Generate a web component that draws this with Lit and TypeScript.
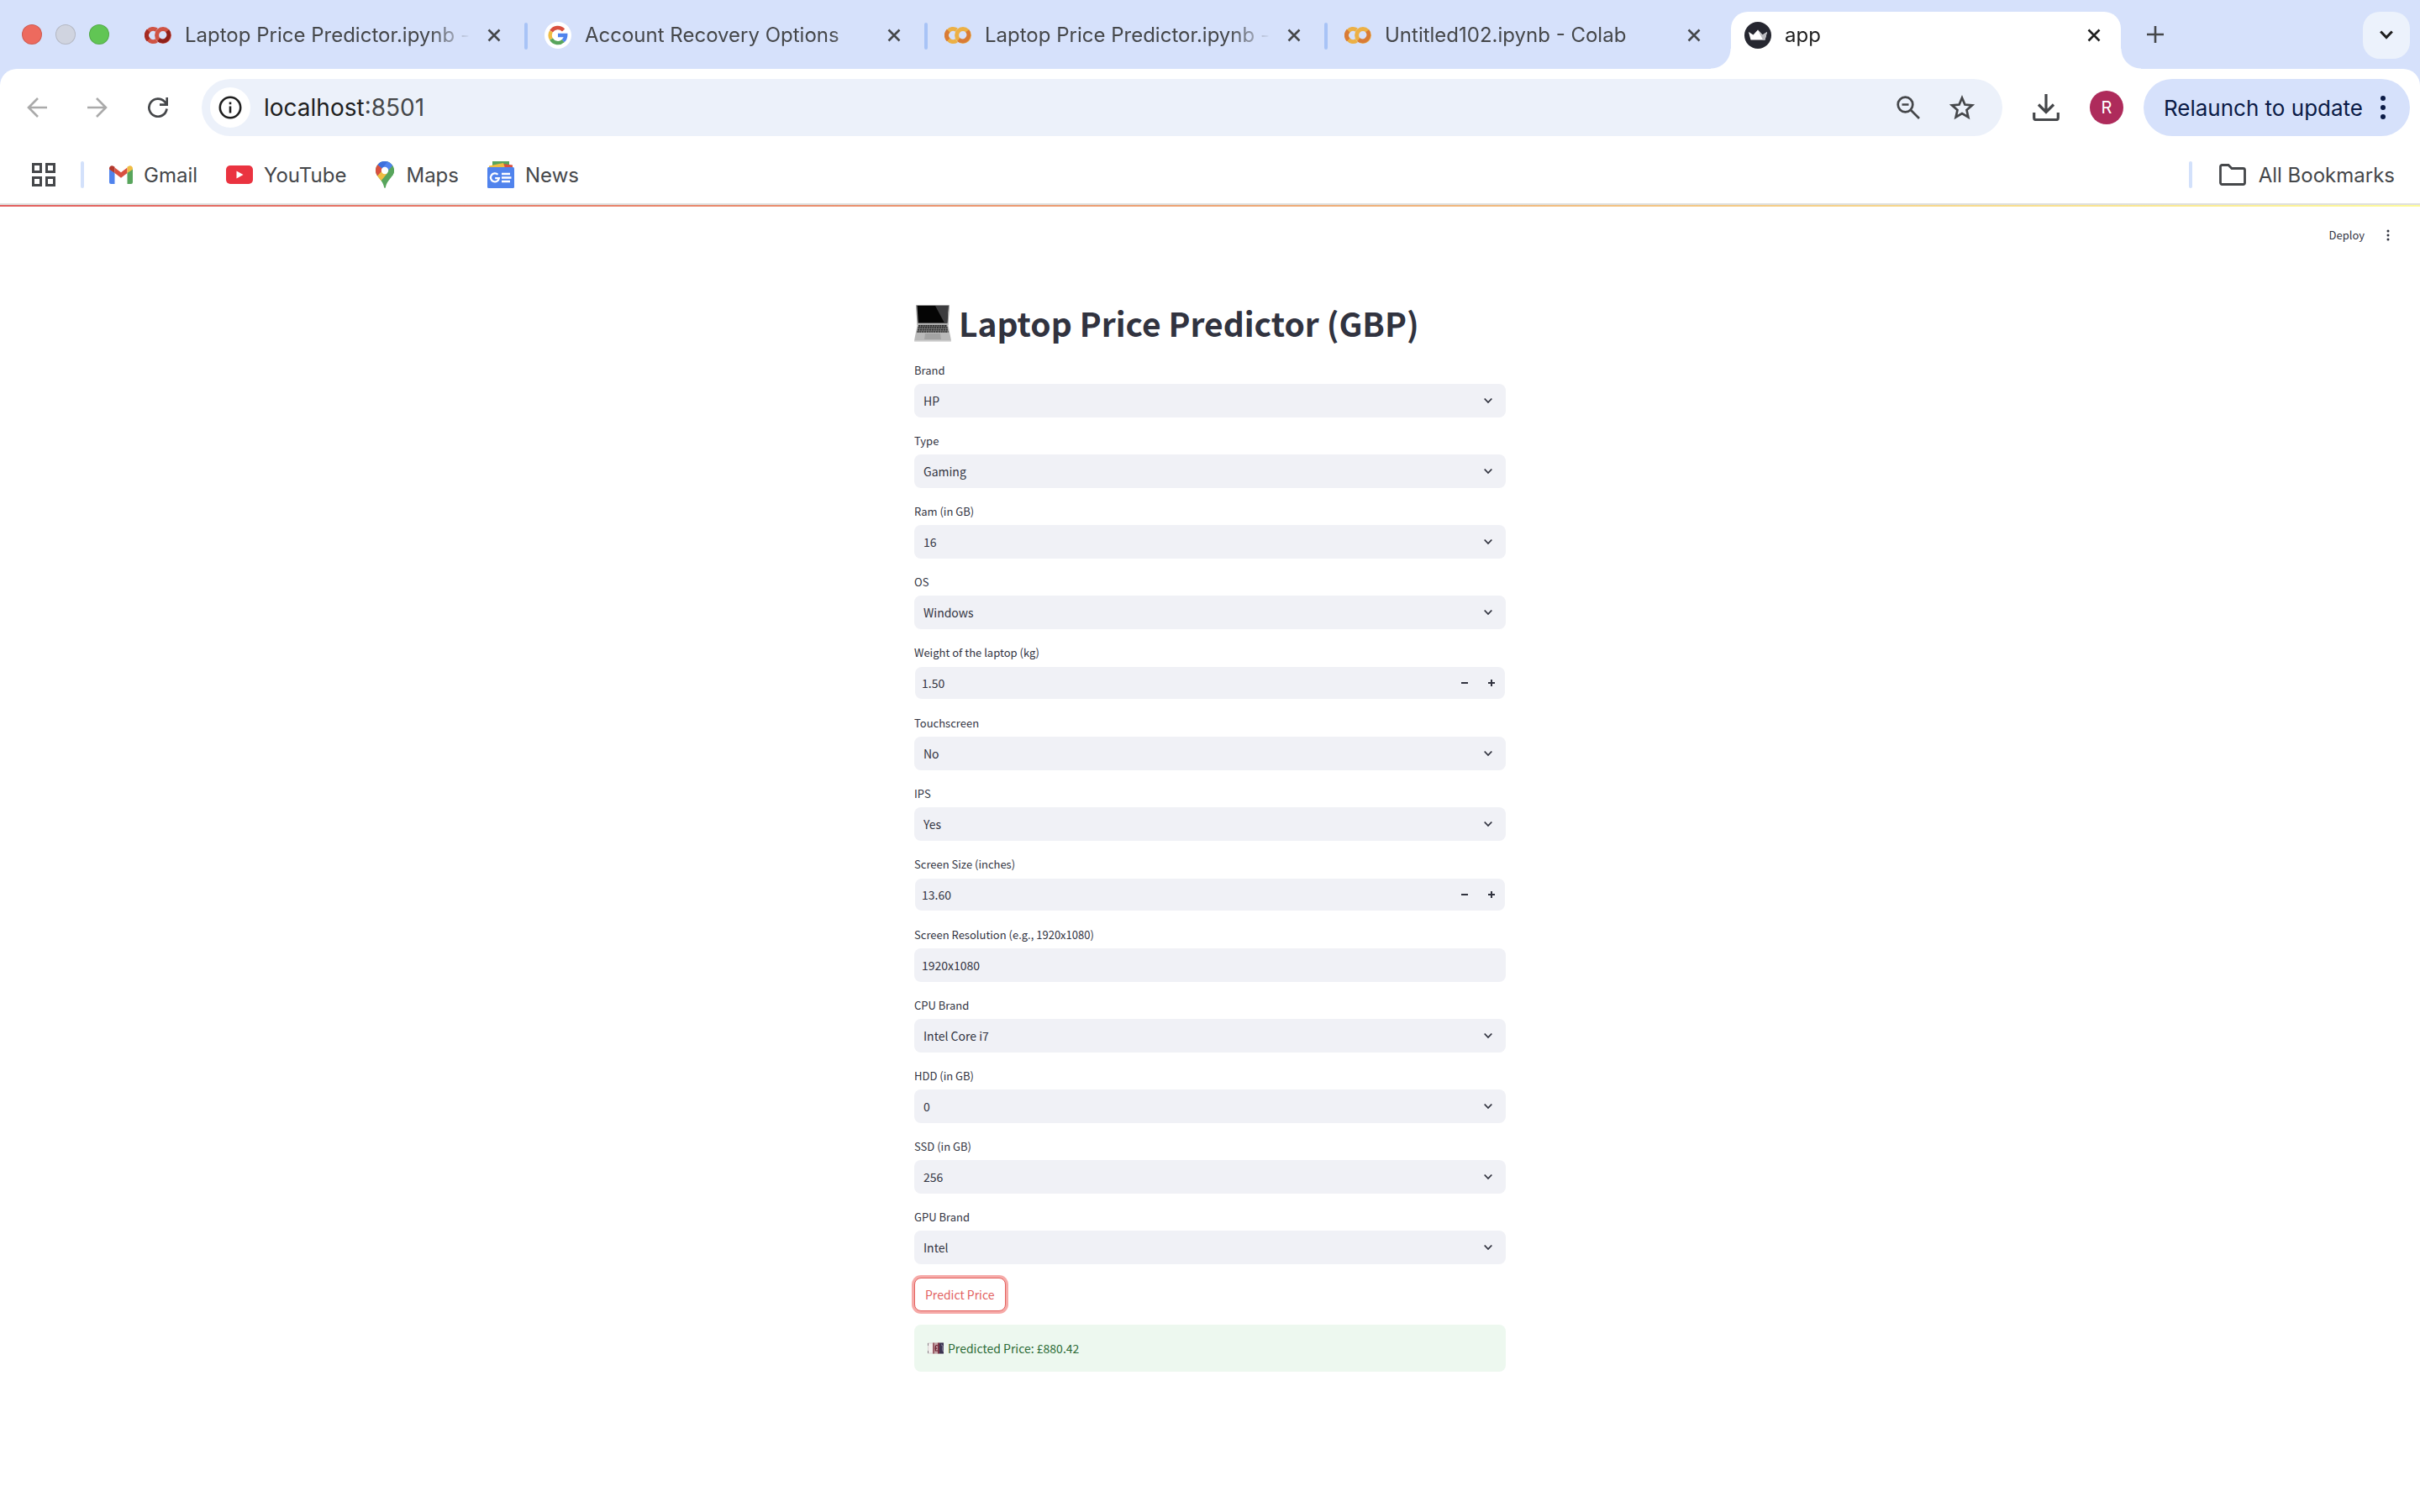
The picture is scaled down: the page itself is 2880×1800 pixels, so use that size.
import { LitElement, html, css, svg, nothing } from "lit";
import { customElement, state } from "lit/decorators.js";

const icon = (w: number, h: number, vb: string, body: unknown) =>
  html`<svg class="icon" width=${w} height=${h} viewBox=${vb} fill="none" aria-hidden="true">${body}</svg>`;

const closeIcon = () =>
  icon(16, 16, "0 0 16 16", svg`<path d="M1.5 1.5l13 13M14.5 1.5l-13 13" stroke="currentColor" stroke-width="2.6"/>`);

const colab = (a: string, b: string, c: string) =>
  icon(32, 32, "0 0 32 32", svg`
    <path d="M14.4 9.6A7.6 7.6 0 1 0 14.4 22.4" stroke=${b} stroke-width="5"/>
    <path d="M4.6 10.6A7.6 7.6 0 0 0 4.6 21.4" stroke=${a} stroke-width="5"/>
    <circle cx="22" cy="16" r="7.4" stroke=${b} stroke-width="5"/>
    <path d="M27.2 10.8A7.4 7.4 0 0 1 16.8 21.2" stroke=${c} stroke-width="5"/>`);

const google = () =>
  icon(32, 32, "0 0 32 32", svg`
    <circle cx="16" cy="16" r="16" fill="#fff"/>
    <path d="M22.6 9.9A9.3 9.3 0 0 0 8 11.3" stroke="#d9503f" stroke-width="4.4"/>
    <path d="M8 11.3a9.3 9.3 0 0 0 0 9.4" stroke="#f0bc42" stroke-width="4.4"/>
    <path d="M8 20.7a9.3 9.3 0 0 0 14.2 2" stroke="#58a55c" stroke-width="4.4"/>
    <path d="M22.2 22.7a9.3 9.3 0 0 0 3-6.7H16" stroke="#5083ed" stroke-width="4.4"/>`);

const crown = () =>
  icon(32, 32, "0 0 32 32", svg`
    <circle cx="16" cy="16" r="16" fill="#262730"/>
    <path d="M5 12l5.500 3.500L16 9.500l5.500 6L27 12l-2.500 9.500h-17z" fill="#fff"/>
    <path d="M16 9.500l5.500 6L27 12l-2.500 9.500H22z" fill="#b9b9bd"/>`);

interface Tab { title: string; icon: () => unknown; active?: boolean }

const TABS: Tab[] = [
  { title: "Laptop Price Predictor.ipynb -", icon: () => colab("#a52a22", "#cf5344", "#8f201a") },
  { title: "Account Recovery Options", icon: google },
  { title: "Laptop Price Predictor.ipynb -", icon: () => colab("#d97b36", "#ecb045", "#d97b36") },
  { title: "Untitled102.ipynb - Colab", icon: () => colab("#d97b36", "#ecb045", "#d97b36") },
  { title: "app", icon: crown, active: true },
];

const gmail = () =>
  icon(28, 22, "0 0 28 22", svg`
    <path d="M0 4v16a2 2 0 0 0 2 2h4.500V8.500z" fill="#5083ed"/>
    <path d="M28 4v16a2 2 0 0 1-2 2h-4.500V8.500z" fill="#58a55c"/>
    <path d="M6.500 2.500L14 8.200l7.500-5.700v6.500L14 14.800 6.500 9z" fill="#d9503f"/>
    <path d="M0 3.500C0 .4 3.200-.8 5.400.9l1.100.8V9L0 4.500z" fill="#b3382c"/>
    <path d="M28 3.500C28 .4 24.800-.8 22.600.9l-1.100.8V9L28 4.500z" fill="#f0bc42"/>`);

const youtube = () =>
  icon(32, 22, "0 0 32 22", svg`
    <rect width="32" height="22" rx="5" fill="#ea3340"/><path d="M12.500 6.500v9l8-4.500z" fill="#fff"/>`);

const maps = () =>
  icon(24, 32, "0 0 24 32", svg`
    <clipPath id="pin"><path d="M12 0a11 11 0 0 1 11 11c0 3.600-1.600 6-4.200 9-3.200 3.700-5 6.500-6 11.300q-.8 1.400-1.600 0C10.200 26.500 8.400 23.700 5.200 20 2.600 17 1 14.600 1 11A11 11 0 0 1 12 0z"/></clipPath>
    <g clip-path="url(#pin)">
      <path d="M0 0h24v32H0z" fill="#58a55c"/>
      <path d="M0 20.500L9 10h9.500L6.500 24.500z" fill="#f0bc42"/>
      <path d="M0 0v20.500L11 9z" fill="#d9503f"/>
      <path d="M3.500 4L11 10.500 20.800 4 16 0H6z" fill="#5083ed"/>
      <path d="M3.500 4L9 8.500 15.500.5 12 0H6z" fill="#3f70dc"/>
      <path d="M12 11L20.800 3.800 24 12v6L14 14z" fill="#58a55c"/>
      <path d="M9 8.500L15.500 0l5.800 5L14 13.500z" fill="#5083ed"/>
    </g>
    <circle cx="12" cy="11" r="4.200" fill="#fff"/>`);

const news = () =>
  icon(32, 32, "0 0 32 32", svg`
    <path d="M6 0h20v8H6z" fill="#58a55c"/>
    <path d="M18 3l12 1.500V9H16z" fill="#d9503f"/>
    <path d="M2 5.500L19 2l2 6H2z" fill="#f0bc42"/>
    <rect y="7" width="32" height="25" rx="1.500" fill="#5083ed"/>
    <path d="M12.500 15.800a5 5 0 1 0 1.400 4.400H9.200" stroke="#fff" stroke-width="2.200"/>
    <path d="M17 15h10M17 19.500h11.500M17 24h10" stroke="#fff" stroke-width="2.400"/>`);

const BOOKMARKS = [
  { label: "Gmail", icon: gmail, href: "#gmail" },
  { label: "YouTube", icon: youtube, href: "#youtube" },
  { label: "Maps", icon: maps, href: "#maps" },
  { label: "News", icon: news, href: "#news" },
];

interface Field { id: string; label: string; kind: "select" | "number" | "text"; value: string }

const FIELDS: Field[] = [
  { id: "brand", label: "Brand", kind: "select", value: "HP" },
  { id: "type", label: "Type", kind: "select", value: "Gaming" },
  { id: "ram", label: "Ram (in GB)", kind: "select", value: "16" },
  { id: "os", label: "OS", kind: "select", value: "Windows" },
  { id: "weight", label: "Weight of the laptop (kg)", kind: "number", value: "1.50" },
  { id: "touch", label: "Touchscreen", kind: "select", value: "No" },
  { id: "ips", label: "IPS", kind: "select", value: "Yes" },
  { id: "size", label: "Screen Size (inches)", kind: "number", value: "13.60" },
  { id: "resolution", label: "Screen Resolution (e.g., 1920x1080)", kind: "text", value: "1920x1080" },
  { id: "cpu", label: "CPU Brand", kind: "select", value: "Intel Core i7" },
  { id: "hdd", label: "HDD (in GB)", kind: "select", value: "0" },
  { id: "ssd", label: "SSD (in GB)", kind: "select", value: "256" },
  { id: "gpu", label: "GPU Brand", kind: "select", value: "Intel" },
];

const button = css`
  button { font: inherit; color: inherit; border: 0; padding: 0; background: none; display: flex; align-items: center; justify-content: center; }
  .icon { display: block; flex: none; }
`;

@customElement("browser-chrome")
class BrowserChrome extends LitElement {
  static styles = [button, css`
    :host { display: block; font-family: Inter, "Liberation Sans", sans-serif; font-size: 24px; color: #45474a; background: #d6e1fb; }
    .strip { display: flex; height: 82px; padding: 0 12px 0 26px; }
    .lights { display: flex; gap: 16px; align-items: center; width: 126px; flex: none; }
    .light { width: 24px; height: 24px; border-radius: 50%; box-sizing: border-box; border: 1px solid #0002; }
    .red { background: #ed6a5e; } .grey { background: #d0d4e0; } .green { background: #61c554; }
    .tabs { display: flex; flex: 0 1 2372px; min-width: 0; }
    .tab { position: relative; display: flex; align-items: center; flex: 1 1 0; min-width: 0; padding: 2px 28px 0 20px; }
    .tab.active { background: #fff; color: #1f1f1f; margin-top: 14px; border-radius: 20px 20px 0 0; padding: 0 24px 12px 16px; flex: 0 1 424px; }
    .tab.active::before, .tab.active::after { content: ""; position: absolute; bottom: 0; width: 24px; height: 24px; }
    .tab.active::before { right: 100%; background: radial-gradient(circle at 0 0, transparent 23px, #fff 24px); }
    .tab.active::after { left: 100%; background: radial-gradient(circle at 100% 0, transparent 23px, #fff 24px); }
    .title { flex: 1; min-width: 0; margin: 0 16px 0 16px; overflow: hidden; white-space: nowrap; line-height: 32px; mask-image: linear-gradient(to right, #000 calc(100% - 52px), transparent calc(100% - 4px)); }
    .divider { width: 4px; height: 32px; border-radius: 2px; background: #a8c3f6; flex: none; align-self: center; margin-top: 4px; }
    .before-active { width: 8px; flex: none; }
    .add { width: 56px; margin: 0 auto 0 2px; padding-left: 22px; }
    .search { width: 56px; height: 56px; margin-top: 14px; border-radius: 20px; background: #ecf2fc; color: #1f1f1f; }
    .toolbar { display: flex; align-items: center; height: 92px; padding: 0 12px 0 32px; background: #fff; border-radius: 20px 20px 0 0; }
    .nav { display: flex; gap: 48px; width: 208px; flex: none; color: #aaa; }
    .nav .reload { color: #45474a; }
    .omnibox { display: flex; align-items: center; flex: 1; min-width: 0; height: 68px; border-radius: 34px; background: #ecf1fa; padding: 0 33px 0 10px; }
    .info { width: 48px; height: 48px; border-radius: 50%; background: #fff; color: #1f1f1f; flex: none; }
    .url { flex: 1; min-width: 0; margin-left: 16px; display: flex; font-size: 28px; color: #1f1f1f; }
    .port { color: #45474a; }
    .star { margin-left: 35px; }
    .download { margin: 0 36px; }
    .avatar { width: 40px; height: 40px; border-radius: 50%; background: #ae2b5b; color: #fff; font-size: 20px; margin-right: 24px; }
    .relaunch { height: 68px; padding: 0 28px 0 24px; border-radius: 34px; background: #d6e1fb; color: #0b1b46; font-size: 26px; gap: 20px; white-space: nowrap; }
    .marks { display: flex; align-items: center; height: 68px; padding: 0 30px 0 38px; background: #fff; border-bottom: 2px solid #dfe0df; }
    .rule { width: 4px; height: 32px; border-radius: 2px; background: #d3e1fb; }
    .apps { margin-right: 30px; }
    .links { display: flex; gap: 34px; margin: 0 auto 0 30px; }
    .mark { display: flex; align-items: center; gap: 13px; color: inherit; text-decoration: none; }
    .all { gap: 15px; margin-left: 32px; }
  `];

  render() {
    return html`
      <div class="strip">
        <div class="lights"><span class="light red"></span><span class="light grey"></span><span class="light green"></span></div>
        <div class="tabs">
          ${TABS.map((t, i) => html`
            ${t.active ? html`<span class="before-active"></span>` : nothing}
            <div class="tab ${t.active ? "active" : ""}">
              ${t.icon()}<span class="title">${t.title}</span>
              <button aria-label="Close tab">${closeIcon()}</button>
            </div>
            ${i < 3 ? html`<span class="divider"></span>` : nothing}`)}
        </div>
        <button class="add" aria-label="New tab">${icon(20, 20, "0 0 20 20", svg`<path d="M10 0v20M0 10h20" stroke="currentColor" stroke-width="2.600"/>`)}</button>
        <button class="search" aria-label="Search tabs">${icon(16, 12, "0 0 16 12", svg`<path d="M1.200 1.500L8 8.500l6.800-7" stroke="currentColor" stroke-width="3"/>`)}</button>
      </div>
      <div class="toolbar">
        <div class="nav">
          <button aria-label="Back">${icon(24, 24, "0 0 24 24", svg`<path d="M24 12H2M13 1L2 12l11 11" stroke="currentColor" stroke-width="2.600"/>`)}</button>
          <button aria-label="Forward">${icon(24, 24, "0 0 24 24", svg`<path d="M0 12h22M11 1l11 11-11 11" stroke="currentColor" stroke-width="2.600"/>`)}</button>
          <button class="reload" aria-label="Reload">${icon(24, 24, "0 0 24 24", svg`<path d="M22.500 13.500A10.600 10.600 0 1 1 20 5.200L22.500 8M22.700 0v8.700H14" stroke="currentColor" stroke-width="2.700"/>`)}</button>
        </div>
        <div class="omnibox">
          <button class="info" aria-label="Site information">${icon(28, 28, "0 0 28 28", svg`<circle cx="14" cy="14" r="12.200" stroke="currentColor" stroke-width="2.600"/><path d="M14 12.500v8M14 7.500v2.800" stroke="currentColor" stroke-width="2.600"/>`)}</button>
          <span class="url"><span>localhost</span><span class="port">:8501</span></span>
          <button aria-label="Zoom">${icon(28, 28, "0 0 28 28", svg`<circle cx="10.500" cy="10.500" r="8.800" stroke="currentColor" stroke-width="2.700"/><path d="M17 17l10 10M6.500 10.500h8" stroke="currentColor" stroke-width="2.700"/>`)}</button>
          <button class="star" aria-label="Bookmark this tab">${icon(30, 30, "0 0 30 30", svg`<path d="M15 3.500l3.400 8 8.600.8-6.500 5.700 1.900 8.500L15 22l-7.400 4.500 1.900-8.500L3 12.300l8.600-.8z" stroke="currentColor" stroke-width="2.700"/>`)}</button>
        </div>
        <button class="download" aria-label="Downloads">${icon(32, 32, "0 0 32 32", svg`<path d="M16 0v21M7 12.500l9 9 9-9M1.700 22v6.500a2 2 0 0 0 2 2h24.600a2 2 0 0 0 2-2V22" stroke="currentColor" stroke-width="3.200"/>`)}</button>
        <button class="avatar" aria-label="Profile">R</button>
        <button class="relaunch">Relaunch to update
          ${icon(8, 28, "0 0 8 28", svg`<g fill="currentColor"><circle cx="4" cy="3" r="3"/><circle cx="4" cy="14" r="3"/><circle cx="4" cy="25" r="3"/></g>`)}
        </button>
      </div>
      <div class="marks">
        <button class="apps" aria-label="Apps">${icon(28, 28, "0 0 28 28", svg`<path d="M1.500 1.500h9v9h-9zM17.500 1.500h9v9h-9zM1.500 17.500h9v9h-9zM17.500 17.500h9v9h-9z" stroke="currentColor" stroke-width="3"/>`)}</button>
        <span class="rule"></span>
        <nav class="links">${BOOKMARKS.map((b) => html`<a class="mark" href=${b.href}>${b.icon()}<span>${b.label}</span></a>`)}</nav>
        <span class="rule"></span>
        <button class="all">
          ${icon(32, 26, "0 0 32 26", svg`<path d="M1.500 22.500V3.500a2 2 0 0 1 2-2H11l4 4h13.500a2 2 0 0 1 2 2v15a2 2 0 0 1-2 2h-25a2 2 0 0 1-2-2z" stroke="currentColor" stroke-width="2.800"/>`)}
          All Bookmarks
        </button>
      </div>`;
  }
}

@customElement("price-form")
class PriceForm extends LitElement {
  @state() private price = "£880.42";

  static styles = [button, css`
    :host { display: block; max-width: 704px; margin: 0 auto; }
    .heading { display: flex; align-items: center; gap: 9px; margin: 0 0 18px; font-size: 39px; line-height: 53px; font-weight: 700; color: #31333f; }
    .fields { display: flex; flex-direction: column; gap: 16px; }
    .label { display: block; font-size: 13px; line-height: 24px; margin-bottom: 4px; }
    .box { display: flex; align-items: center; height: 40px; border-radius: 8px; background: #f0f1f6; overflow: hidden; }
    .number { box-sizing: border-box; background-clip: padding-box; border: 1px solid transparent; border-radius: 9px; }
    .control { flex: 1; min-width: 0; width: 100%; height: 40px; padding: 0 11px; border: 0; outline: 0; background: none; font: inherit; color: inherit; appearance: none; }
    .entry { padding: 0 9px; }
    .number .entry { padding: 0 8px; }
    .select { display: grid; align-items: center; }
    .select > * { grid-area: 1 / 1; }
    .chevron { justify-self: end; margin-right: 16px; pointer-events: none; }
    .step { width: 32px; height: 38px; }
    .predict { height: 40px; padding: 0 12px; margin: 16px 0; border: 1px solid #e2625f; border-radius: 8px; box-shadow: 0 0 0 3px #f6aaa8; background: #fff; color: #e2625f; }
    .result { display: flex; align-items: center; gap: 5px; height: 56px; padding: 0 16px; border-radius: 8px; background: #edf8ef; color: #2c6b36; }
  `];

  private control(f: Field) {
    if (f.kind === "select")
      return html`<div class="box select">
        <select class="control" id=${f.id}><option>${f.value}</option></select>
        <span class="chevron">${icon(10, 8, "0 0 10 8", svg`<path d="M.7 1.500L5 6l4.300-4.500" stroke="#31333f" stroke-width="1.800"/>`)}</span>
      </div>`;
    if (f.kind === "text")
      return html`<div class="box"><input class="control entry" id=${f.id} type="text" .value=${f.value} /></div>`;
    return html`<div class="box number">
      <input class="control entry" id=${f.id} type="text" inputmode="decimal" .value=${f.value} />
      <button class="step" aria-label="Decrease">${icon(8, 8, "0 0 8 8", svg`<path d="M0 4h8" stroke="#31333f" stroke-width="2"/>`)}</button>
      <button class="step" aria-label="Increase">${icon(8, 8, "0 0 8 8", svg`<path d="M0 4h8M4 0v8" stroke="#31333f" stroke-width="2"/>`)}</button>
    </div>`;
  }

  render() {
    return html`
      <h1 class="heading">
        ${icon(44, 44, "0 0 44 44", svg`
          <path d="M3 0h38a1 1 0 0 1 1 1l-1.500 23h-37L2 1a1 1 0 0 1 1-1z" fill="#9a9a9a"/><path d="M3.500 1h37L39.200 21.500H4.800z" fill="#050505"/>
          <path d="M25 1h15.500L39.200 21.500H36z" fill="#3c3c3e"/>
          <path d="M4 22h36L44 42.500a1 1 0 0 1-1 1H1a1 1 0 0 1-1-1z" fill="#b9b9b9"/>
          <path d="M5 23.500h34l2 9H3z" fill="#8d8d8d"/>
          <path d="M5 24.800h34M4.500 27.200h35M4 29.600h36M3.500 32h37" stroke="#2b2b2b" stroke-width="1.700" stroke-dasharray="2.200 .6"/>
          <path d="M13 34h18l1 7H12z" fill="#a3a3a3"/><path d="M0 42.500h44v1H0z" fill="#dcdcdc"/>`)}
        Laptop Price Predictor (GBP)
      </h1>
      <div class="fields">
        ${FIELDS.map((f) => html`<div><label class="label" for=${f.id}>${f.label}</label>${this.control(f)}</div>`)}
      </div>
      <button class="predict">Predict Price</button>
      <div class="result" role="status">
        ${icon(19, 14, "0 0 19 14", svg`
          <rect width="19" height="13" y=".5" fill="#d9d3d4"/><rect x="1" y="1.500" width="5" height="11" fill="#f2efed"/>
          <path d="M.5 1v3M.5 10v3" stroke="#8a8088"/>
          <rect x="6" y=".5" width="2" height="13" fill="#9b5f68"/><rect x="8" y=".5" width="4.500" height="13" fill="#c3a3a6"/>
          <rect x="12" y=".5" width="2" height="13" fill="#7d3445"/><rect x="14" y=".5" width="5" height="13" fill="#3c3552"/>
          <path d="M16 3c1.500 0 2 1 2 2.500S17.500 9 18.500 11" stroke="#9f98b0"/>
          <path d="M11.800 4a1.500 1.500 0 0 0-2.500 1.300V10h3M8.500 7.200h2.800" stroke="#6b1c2e" stroke-width="1.200"/>`)}
        <span>Predicted Price: ${this.price}</span>
      </div>`;
  }
}

@customElement("app-root")
class AppRoot extends LitElement {
  static styles = [button, css`
    :host { display: block; min-height: 100vh; background: #fff; }
    .page { font-family: "Noto Sans CJK SC", "Open Sans", sans-serif; font-size: 14px; line-height: 24px; color: #31333f; padding-bottom: 96px; }
    .stripe { height: 2px; background: linear-gradient(to right, #e2605f, #eda575 50%, #fdfb9c); }
    .header { display: flex; justify-content: flex-end; align-items: center; gap: 24px; height: 68px; padding: 0 34px; font-size: 13px; margin-bottom: 44px; }
  `];

  render() {
    return html`
      <browser-chrome></browser-chrome>
      <main class="page">
        <div class="stripe"></div>
        <header class="header">
          <button>Deploy</button>
          <button aria-label="Main menu">${icon(8, 14, "0 0 8 14", svg`<g fill="#31333f"><circle cx="4" cy="2" r="1.500"/><circle cx="4" cy="7" r="1.500"/><circle cx="4" cy="12" r="1.500"/></g>`)}</button>
        </header>
        <price-form></price-form>
      </main>`;
  }
}
